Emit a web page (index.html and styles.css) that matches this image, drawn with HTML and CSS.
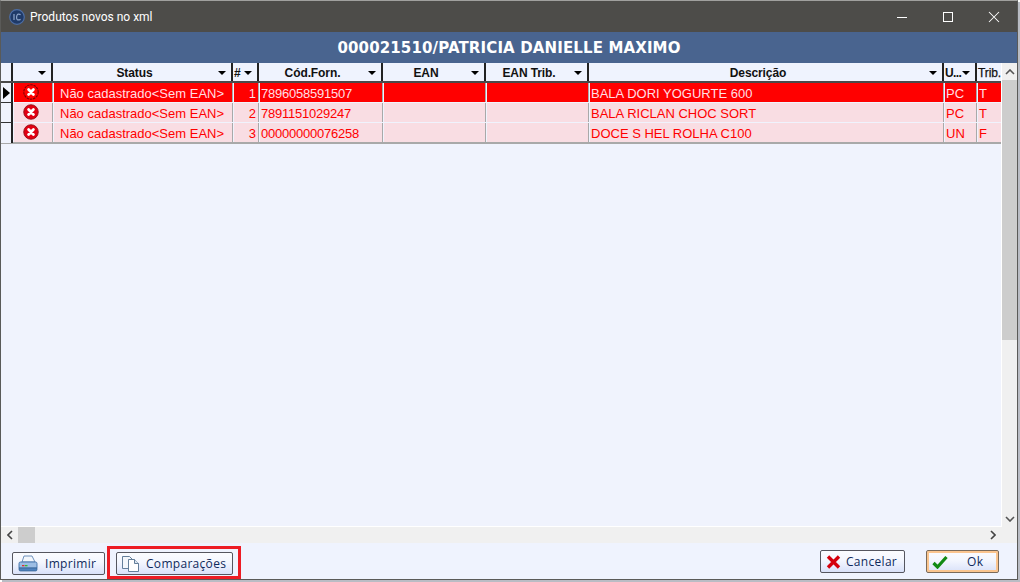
FILE: index.html
```html
<!DOCTYPE html>
<html lang="pt">
<head>
<meta charset="utf-8">
<title>Produtos novos no xml</title>
<link rel="stylesheet" href="styles.css">
</head>
<body>
<svg class="defs" width="0" height="0" aria-hidden="true">
  <symbol id="arrow" viewBox="0 0 8 4"><path d="M0 0h8L4 4z" fill="#000"/></symbol>
  <symbol id="err" viewBox="0 0 16 16">
    <circle cx="8" cy="8" r="7.3" fill="#e10012" stroke="#8a0a12" stroke-width=".8"/>
    <path d="M5.6 5.6l4.8 4.8M10.400 5.6l-4.8 4.8" stroke="#fff" stroke-width="2.8" stroke-linecap="round"/>
  </symbol>
  <symbol id="errsel" viewBox="0 0 16 16">
    <circle cx="8" cy="8" r="7.2" fill="#f00" stroke="#7a0000" stroke-width="1.1" stroke-dasharray="2.5 .8"/>
    <path d="M5.6 5.6l4.8 4.8M10.400 5.6l-4.8 4.8" stroke="#fff" stroke-width="2.8" stroke-linecap="round"/>
  </symbol>
</svg>
<div class="window">
  <div class="titlebar">
    <svg class="appicon" width="16" height="16" viewBox="0 0 16 16">
      <circle cx="8" cy="8" r="7.3" fill="#1f3a68" stroke="#4d6ea5" stroke-width="1.2"/>
      <path d="M5 5v6M11.6 5.6Q8 3.8 7.6 8T11.6 10.4" fill="none" stroke="#8fa7cc" stroke-width="1.2"/>
    </svg>
    <span class="wintitle">Produtos novos no xml</span>
    <div class="winbtns">
      <svg width="12" height="12" viewBox="0 0 12 12"><path d="M1 6.5h10" stroke="#fff"/></svg>
      <svg width="12" height="12" viewBox="0 0 12 12"><rect x="1.5" y="1.5" width="9" height="9" fill="none" stroke="#fff"/></svg>
      <svg width="12" height="12" viewBox="0 0 12 12"><path d="M1 1l10 10M11 1L1 11" stroke="#fff" stroke-width="1.05"/></svg>
    </div>
  </div>
  <div class="banner">000021510/PATRICIA DANIELLE MAXIMO</div>
  <div class="gridarea">
    <div class="grid">
      <div class="row head">
        <div class="hc ind"></div>
        <div class="hc"><span></span><svg class="ar"><use href="#arrow"/></svg></div>
        <div class="hc"><span>Status</span><svg class="ar"><use href="#arrow"/></svg></div>
        <div class="hc narrow"><span class="left">#</span><svg class="ar"><use href="#arrow"/></svg></div>
        <div class="hc"><span>Cód.Forn.</span><svg class="ar"><use href="#arrow"/></svg></div>
        <div class="hc"><span>EAN</span><svg class="ar"><use href="#arrow"/></svg></div>
        <div class="hc"><span>EAN Trib.</span><svg class="ar"><use href="#arrow"/></svg></div>
        <div class="hc"><span>Descrição</span><svg class="ar"><use href="#arrow"/></svg></div>
        <div class="hc narrow"><span class="left tight">U...</span><svg class="ar"><use href="#arrow"/></svg></div>
        <div class="hc narrow last"><span class="left">Trib.</span></div>
      </div>
      <div class="row data sel">
        <div class="c ind"><svg class="tri" width="7" height="12" viewBox="0 0 7 12"><path d="M0 0l7 6-7 6z" fill="#000"/></svg></div>
        <div class="c ic"><svg class="err" width="16" height="16"><use href="#errsel"/></svg></div>
        <div class="c">Não cadastrado&lt;Sem EAN&gt;</div>
        <div class="c num">1</div>
        <div class="c">7896058591507</div>
        <div class="c"></div>
        <div class="c"></div>
        <div class="c">BALA DORI YOGURTE 600</div>
        <div class="c">PC</div>
        <div class="c">T</div>
      </div>
      <div class="row data">
        <div class="c ind"></div>
        <div class="c ic"><svg class="err" width="16" height="16"><use href="#err"/></svg></div>
        <div class="c">Não cadastrado&lt;Sem EAN&gt;</div>
        <div class="c num">2</div>
        <div class="c">7891151029247</div>
        <div class="c"></div>
        <div class="c"></div>
        <div class="c">BALA RICLAN CHOC SORT</div>
        <div class="c">PC</div>
        <div class="c">T</div>
      </div>
      <div class="row data">
        <div class="c ind"></div>
        <div class="c ic"><svg class="err" width="16" height="16"><use href="#err"/></svg></div>
        <div class="c">Não cadastrado&lt;Sem EAN&gt;</div>
        <div class="c num">3</div>
        <div class="c">00000000076258</div>
        <div class="c"></div>
        <div class="c"></div>
        <div class="c">DOCE S HEL ROLHA C100</div>
        <div class="c">UN</div>
        <div class="c">F</div>
      </div>
    </div>
    <div class="vscroll">
      <svg class="sa" width="10" height="6" viewBox="0 0 10 6"><path d="M1 5l4-4 4 4" fill="none" stroke="#555" stroke-width="1.6"/></svg>
      <div class="vthumb"></div>
      <div class="vtrack"></div>
      <svg class="sa" width="10" height="6" viewBox="0 0 10 6"><path d="M1 1l4 4 4-4" fill="none" stroke="#555" stroke-width="1.6"/></svg>
    </div>
  </div>
  <div class="hscroll">
    <svg class="sah" width="6" height="10" viewBox="0 0 6 10"><path d="M5 1L1 5l4 4" fill="none" stroke="#444" stroke-width="1.6"/></svg>
    <div class="hthumb"></div>
    <div class="hspace"></div>
    <svg class="sah" width="6" height="10" viewBox="0 0 6 10"><path d="M1 1l4 4-4 4" fill="none" stroke="#444" stroke-width="1.6"/></svg>
  </div>
  <div class="footer">
    <button class="btn b-imp" type="button">
      <svg width="20" height="18" viewBox="0 0 20 18">
        <path d="M6 1h8l3 6H4z" fill="#f2f6fc" stroke="#5f86b5" stroke-width=".9"/>
        <path d="M2.500 7h15a1.500 1.500 0 0 1 1.500 1.500V13H1V8.500A1.500 1.500 0 0 1 2.500 7z" fill="#9cbde4" stroke="#3f6fa8" stroke-width=".9"/>
        <path d="M1 13h18v1.500a1.500 1.500 0 0 1-1.500 1.500h-15A1.500 1.500 0 0 1 1 14.500z" fill="#4f82be" stroke="#31608f" stroke-width=".7"/>
        <rect x="4" y="10" width="2.500" height="1.300" fill="#d33"/><rect x="7" y="10" width="2.500" height="1.300" fill="#3b3"/>
      </svg>
      <span class="lab imp">Imprimir</span>
    </button>
    <div class="highlight">
      <button class="btn b-cmp" type="button">
        <svg width="20" height="18" viewBox="0 0 20 18">
          <path d="M1.500 1.500h7l3 3v9h-10z" fill="#f3f6fb" stroke="#54708f" stroke-width=".9"/>
          <path d="M7.500 4.500h6l4 4v8h-10z" fill="#fff" stroke="#54708f" stroke-width=".9"/>
          <path d="M13.500 4.500v4h4" fill="#dbe5f0" stroke="#54708f" stroke-width=".9"/>
        </svg>
        <span class="lab cmp">Comparações</span>
      </button>
    </div>
    <div class="spacer"></div>
    <button class="btn b-can" type="button">
      <svg width="15" height="14" viewBox="0 0 15 14"><path d="M2 1.500l11 11M13 1.500l-11 11" stroke="#d5000c" stroke-width="3.400"/></svg>
      <span class="lab can">Cancelar</span>
    </button>
    <button class="btn b-ok" type="button">
      <svg width="16" height="14" viewBox="0 0 16 14"><path d="M1.500 8l4 4L14.500 2" fill="none" stroke="#118a13" stroke-width="3.200"/></svg>
      <span class="lab ok">Ok</span>
    </button>
  </div>
</div>
</body>
</html>
```
FILE: styles.css
```css
* { box-sizing: border-box; }
html, body { margin: 0; padding: 0; }
body {
  width: 1020px;
  height: 582px;
  overflow: hidden;
  background: #fff;
  font-family: "Liberation Sans", Arial, sans-serif;
}
.defs { position: absolute; }
.window {
  width: 1018px;
  height: 580px;
  border: 1px solid #5a5a58;
  border-top-color: #a0a09e;
  box-shadow: 2px 2px 0 #b9bcc4;
  display: flex;
  flex-direction: column;
  background: #eff3fe;
}
.titlebar {
  height: 31px;
  flex: none;
  background: #4d4c49;
  display: flex;
  align-items: center;
  padding-left: 8px;
  color: #fff;
  font-family: Roboto, "Liberation Sans", sans-serif;
  font-size: 12px;
}
.appicon { flex: none; }
.wintitle { margin-left: 5px; }
.winbtns {
  margin-left: auto;
  display: flex;
  gap: 34px;
  margin-right: 17px;
}
.banner {
  height: 31px;
  flex: none;
  background: #49648f;
  color: #fff;
  font-family: "DejaVu Sans", sans-serif;
  font-weight: bold;
  font-size: 15px;
  letter-spacing: .13px;
  text-align: center;
  line-height: 33px;
}
.gridarea {
  flex: none;
  height: 464px;
  display: flex;
  background: #f0f3fd;
}
.grid { width: 1000px; flex: none; border-bottom: 1px solid #fff; }
.row {
  display: grid;
  grid-template-columns: 12px 40px 180px 26px 124px 103px 103px 355px 33px 24px;
}
.head {
  height: 20px;
  border-bottom: 2px solid #4a4a4a;
  background: #eff3fe;
}
.hc {
  border-right: 2px solid #222;
  display: flex;
  align-items: center;
  font-size: 12px;
  font-weight: bold;
  color: #111;
  padding: 1px 5px 0 0;
  height: 18px;
  letter-spacing: -.1px;
}
.hc span { flex: 1; text-align: center; padding-right: 2px; }
.hc .left { text-align: left; padding: 0 0 0 1px; }
.hc .tight { letter-spacing: -.6px; overflow: hidden; white-space: nowrap; }
.hc.last { border-right: 0; padding: 1px 0 0; white-space: nowrap; overflow: hidden; font-weight: normal; -webkit-text-stroke: .25px #111; }
.ar { width: 8px; height: 4px; flex: none; }
.data {
  height: 20px;
  background: #f9dde3;
  color: #ff0000;
  font-size: 13px;
  line-height: 21px;
  border-bottom: 1px solid #f0f3fd;
}
.data:nth-child(4) { border-bottom: 2px solid #a9a9a9; height: 21px; }
.data .c {
  border-right: 1px solid #a9a9a9;
  border-left: 1px solid #f0f3fd;
  padding-left: 1px;
  white-space: nowrap;
  overflow: hidden;
}
.data .c:nth-child(3) { padding-left: 6px; }
.data .c:nth-child(5) { letter-spacing: -.23px; }
.data .c:last-child { border-right: 0; }
.sel { background: #ff0000; }
.sel .c { color: #ffdfe4; }
.data .ind {
  background: #f0f3fd;
  border-left: 0;
  border-right: 2px solid #222;
  border-bottom: 1px solid #333;
  margin-bottom: -1px;
  padding: 0 0 0 2px;
  display: flex;
  align-items: center;
}
.data:nth-child(4) .ind { border-bottom: 0; }
.data .ic { display: flex; justify-content: center; align-items: center; padding: 0; }
.err { display: block; margin-top: -1px; margin-left: -4px; }
.num { text-align: right; padding-right: 2px; }
.vscroll {
  width: 16px;
  flex: none;
  background: #f0f0f0;
  border-left: 1px solid #fff;
  display: flex;
  flex-direction: column;
  align-items: center;
}
.sa { flex: none; margin: 6px 0 5px; }
.vthumb { width: 15px; height: 260px; flex: none; background: #cdcdcd; }
.vtrack { flex: 1; }
.hscroll {
  flex: none;
  height: 16px;
  background: #f0f0f0;
  display: flex;
  align-items: center;
  padding: 0 21px 0 6px;
}
.sah { flex: none; }
.hthumb { width: 17px; height: 16px; background: #cdcdcd; margin-left: 5px; }
.hspace { flex: 1; }
.footer {
  flex: 1;
  display: flex;
  align-items: flex-start;
  padding: 0 18px 0 11px;
  background: #eff3fe;
}
.btn {
  height: 23px;
  border: 1px solid #55565f;
  border-radius: 2px;
  background: linear-gradient(#fbfcff 0, #f3f6fe 45%, #d9e1f9 100%);
  display: flex;
  align-items: center;
  padding: 0 0 0 5px;
  font-family: "Open Sans", "Liberation Sans", sans-serif;
  font-size: 12px;
  color: #0f2a5c;
}
.btn svg { flex: none; }
.lab { letter-spacing: .3px; }
.b-imp { width: 93px; margin: 9px 2px 0 0; }
.imp { margin-left: 7px; }
.highlight {
  border: 3px solid #ed1c24;
  padding: 3px 5px 0 6px;
  display: flex;
  margin-top: 3px;
  height: 33px;
}
.b-cmp { width: 117px; padding-left: 4px; }
.cmp { margin-left: 5px; }
.spacer { flex: 1; }
.b-can { width: 85px; margin: 7px 21px 0 0; padding-left: 5px; }
.can { margin-left: 5px; }
.b-ok {
  width: 73px;
  margin-top: 7px;
  padding-left: 5px;
  border-color: #7a6a5a;
  box-shadow: inset 0 0 0 2px #fbc58f;
}
.ok { margin-left: 19px; }
```
